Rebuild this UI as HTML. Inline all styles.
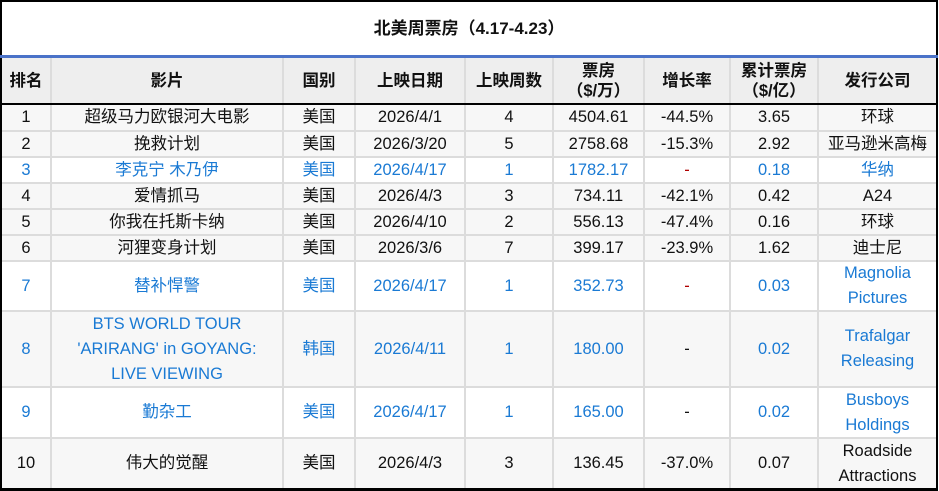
<!DOCTYPE html>
<html><head><meta charset="utf-8"><style>
html,body{margin:0;padding:0;background:#fff;width:939px;height:491px;overflow:hidden;position:relative}
*{box-sizing:border-box}
.frame{position:absolute;left:0;top:0;width:938px;height:491px;background:#000}
.title{position:absolute;left:2px;top:2px;width:934px;height:53px;background:#fff;text-align:center;line-height:53px;font-weight:bold;font-size:17px;font-family:"Liberation Sans","Noto Sans CJK SC",sans-serif;color:#111}
.blue{position:absolute;left:0;top:55px;width:938px;height:3px;background:#4a72c8}
.grid{position:absolute;left:2px;width:934px;display:grid;grid-template-columns:48px 230px 70px 108px 86px 89px 84px 86px 117px;gap:2px;background:#dcdcdc;font-family:"Liberation Sans","Noto Sans CJK SC",sans-serif;font-size:16.5px;color:#111}
.grid div{display:flex;align-items:center;justify-content:center;text-align:center;line-height:25px;background:#f7f7f7;overflow:hidden}
.hd{top:58px;height:45px;grid-template-rows:45px}
.hd div{background:#eee;font-weight:bold;line-height:20px}
.bd{top:105px;height:383px;grid-template-rows:25px 24px 24px 24px 24px 24px 48px 74px 49px 49px}
.bd div.w{background:#fff}
.bd div.b{color:#1a7ad4}
.bd div.r{color:#b00000}
</style></head><body>
<div class="frame"></div>
<div class="title">北美周票房（4.17-4.23）</div>
<div class="blue"></div>
<div class="grid hd"><div>排名</div><div>影片</div><div>国别</div><div>上映日期</div><div>上映周数</div><div>票房<br>（$/万）</div><div>增长率</div><div>累计票房<br>（$/亿）</div><div>发行公司</div></div>
<div class="grid bd">
<div>1</div><div>超级马力欧银河大电影</div><div>美国</div><div>2026/4/1</div><div>4</div><div>4504.61</div><div>-44.5%</div><div>3.65</div><div>环球</div>
<div>2</div><div>挽救计划</div><div>美国</div><div>2026/3/20</div><div>5</div><div>2758.68</div><div>-15.3%</div><div>2.92</div><div>亚马逊米高梅</div>
<div class="w b">3</div><div class="w b">李克宁 木乃伊</div><div class="w b">美国</div><div class="w b">2026/4/17</div><div class="w b">1</div><div class="w b">1782.17</div><div class="w r">-</div><div class="w b">0.18</div><div class="w b">华纳</div>
<div>4</div><div>爱情抓马</div><div>美国</div><div>2026/4/3</div><div>3</div><div>734.11</div><div>-42.1%</div><div>0.42</div><div>A24</div>
<div>5</div><div>你我在托斯卡纳</div><div>美国</div><div>2026/4/10</div><div>2</div><div>556.13</div><div>-47.4%</div><div>0.16</div><div>环球</div>
<div>6</div><div>河狸变身计划</div><div>美国</div><div>2026/3/6</div><div>7</div><div>399.17</div><div>-23.9%</div><div>1.62</div><div>迪士尼</div>
<div class="w b">7</div><div class="w b">替补悍警</div><div class="w b">美国</div><div class="w b">2026/4/17</div><div class="w b">1</div><div class="w b">352.73</div><div class="w r">-</div><div class="w b">0.03</div><div class="w b">Magnolia<br>Pictures</div>
<div class="b">8</div><div class="b">BTS WORLD TOUR<br>'ARIRANG' in GOYANG:<br>LIVE VIEWING</div><div class="b">韩国</div><div class="b">2026/4/11</div><div class="b">1</div><div class="b">180.00</div><div>-</div><div class="b">0.02</div><div class="b">Trafalgar<br>Releasing</div>
<div class="w b">9</div><div class="w b">勤杂工</div><div class="w b">美国</div><div class="w b">2026/4/17</div><div class="w b">1</div><div class="w b">165.00</div><div class="w">-</div><div class="w b">0.02</div><div class="w b">Busboys<br>Holdings</div>
<div>10</div><div>伟大的觉醒</div><div>美国</div><div>2026/4/3</div><div>3</div><div>136.45</div><div>-37.0%</div><div>0.07</div><div>Roadside<br>Attractions</div>
</div>
</body></html>
